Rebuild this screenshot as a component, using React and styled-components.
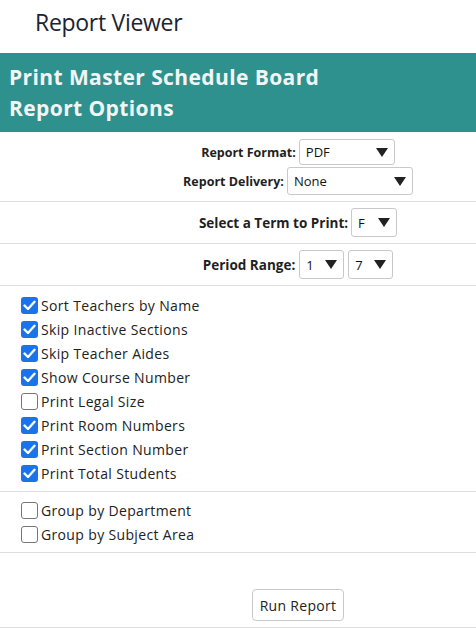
import React from "react"
import styled, { createGlobalStyle } from "styled-components"

const GlobalStyle = createGlobalStyle`
  body {
    margin: 0;
    background: #fff;
    font-family: "Open Sans", "Liberation Sans", sans-serif;
    color: #1f1f1f;
  }
`

const Page = styled.div`
  width: 476px;
  display: flex;
  flex-direction: column;
`

const TopBar = styled.div`
  height: 53px;
  display: flex;
  align-items: center;
  padding-left: 35px;
  padding-bottom: 10px;
  box-sizing: border-box;
  font-size: 23px;
  font-weight: 500;
  color: #1b2335;
  letter-spacing: -0.3px;
`

const Banner = styled.div`
  background: #2f918d;
  color: #f3f5f5;
  padding: 9px 9px 8px;
  font-size: 21px;
  font-weight: 700;
  line-height: 31px;
  letter-spacing: 0.4px;
`

const Section = styled.div`
  border-bottom: 1px solid #dedede;
  padding: ${p => p.pad || "6px 0"};
  display: flex;
  flex-direction: column;
  align-items: ${p => (p.left ? "flex-start" : "center")};
  gap: ${p => (p.left ? 0 : 2)}px;
`

const FieldRow = styled.div`
  display: flex;
  align-items: center;
  gap: ${p => p.gap || 3}px;
  padding-left: 120px;
  font-size: ${p => p.size || 12.5}px;
  font-weight: 700;
  color: #1f1f1f;
`

const Select = styled.div`
  width: ${p => p.w}px;
  height: ${p => p.h || 26}px;
  box-sizing: border-box;
  border: 1px solid #c9c9c9;
  border-radius: 3px;
  display: flex;
  align-items: center;
  justify-content: space-between;
  padding: 0 6px 0 6px;
  font-size: 13px;
  font-weight: 400;
  color: #111;
  background: #fff;
`

const Arrow = () => (
  <svg width="12" height="9" viewBox="0 0 12 9">
    <polygon points="0,0 12,0 6,9" fill="#222" />
  </svg>
)

const CheckRow = styled.label`
  display: flex;
  align-items: center;
  gap: 3px;
  height: 24px;
  font-size: 14px;
  letter-spacing: 0.35px;
  color: #222;
`

const Box = styled.span`
  width: 17px;
  height: 17px;
  box-sizing: border-box;
  border-radius: 3px;
  display: flex;
  align-items: center;
  justify-content: center;
  background: ${p => (p.checked ? "#1a73e8" : "#fff")};
  border: ${p => (p.checked ? "none" : "1px solid #767676")};
`

const Check = ({ checked, children }) => (
  <CheckRow>
    <Box checked={checked}>
      {checked && (
        <svg width="13" height="11" viewBox="0 0 13 11">
          <path d="M1.5 5.5 L5 9 L11.5 1.8" stroke="#fff" strokeWidth="2.4" fill="none" strokeLinecap="round" strokeLinejoin="round" />
        </svg>
      )}
    </Box>
    {children}
  </CheckRow>
)

const ButtonWrap = styled.div`
  border-bottom: 1px solid #dedede;
  padding: 36px 0 6px 120px;
  display: flex;
  justify-content: center;
`

const Button = styled.button`
  height: 32px;
  width: 92px;
  border: 1px solid #c9c9c9;
  border-radius: 4px;
  background: #fff;
  font-family: inherit;
  font-size: 14px;
  letter-spacing: 0.3px;
  color: #222;
  padding: 0;
`

const options = [
  ["Sort Teachers by Name", true],
  ["Skip Inactive Sections", true],
  ["Skip Teacher Aides", true],
  ["Show Course Number", true],
  ["Print Legal Size", false],
  ["Print Room Numbers", true],
  ["Print Section Number", true],
  ["Print Total Students", true],
]

export default function App() {
  return (
    <Page>
      <GlobalStyle />
      <TopBar>Report Viewer</TopBar>
      <Banner>
        Print Master Schedule Board
        <br />
        Report Options
      </Banner>
      <Section pad="7px 0 6px">
        <FieldRow>
          Report Format:
          <Select w={96}>PDF<Arrow /></Select>
        </FieldRow>
        <FieldRow>
          Report Delivery:
          <Select w={126} h={28}>None<Arrow /></Select>
        </FieldRow>
      </Section>
      <Section>
        <FieldRow size={13.5}>
          Select a Term to Print:
          <Select w={46} h={29}>F<Arrow /></Select>
        </FieldRow>
      </Section>
      <Section>
        <FieldRow size={13.5} gap={4}>
          Period Range:
          <Select w={45} h={29}>1<Arrow /></Select>
          <Select w={45} h={29}>7<Arrow /></Select>
        </FieldRow>
      </Section>
      <Section left pad="7px 0 6px 21px">
        {options.map(([label, on]) => (
          <Check key={label} checked={on}>{label}</Check>
        ))}
      </Section>
      <Section left pad="6px 0 6px 21px">
        <Check>Group by Department</Check>
        <Check>Group by Subject Area</Check>
      </Section>
      <ButtonWrap>
        <Button>Run Report</Button>
      </ButtonWrap>
    </Page>
  )
}
